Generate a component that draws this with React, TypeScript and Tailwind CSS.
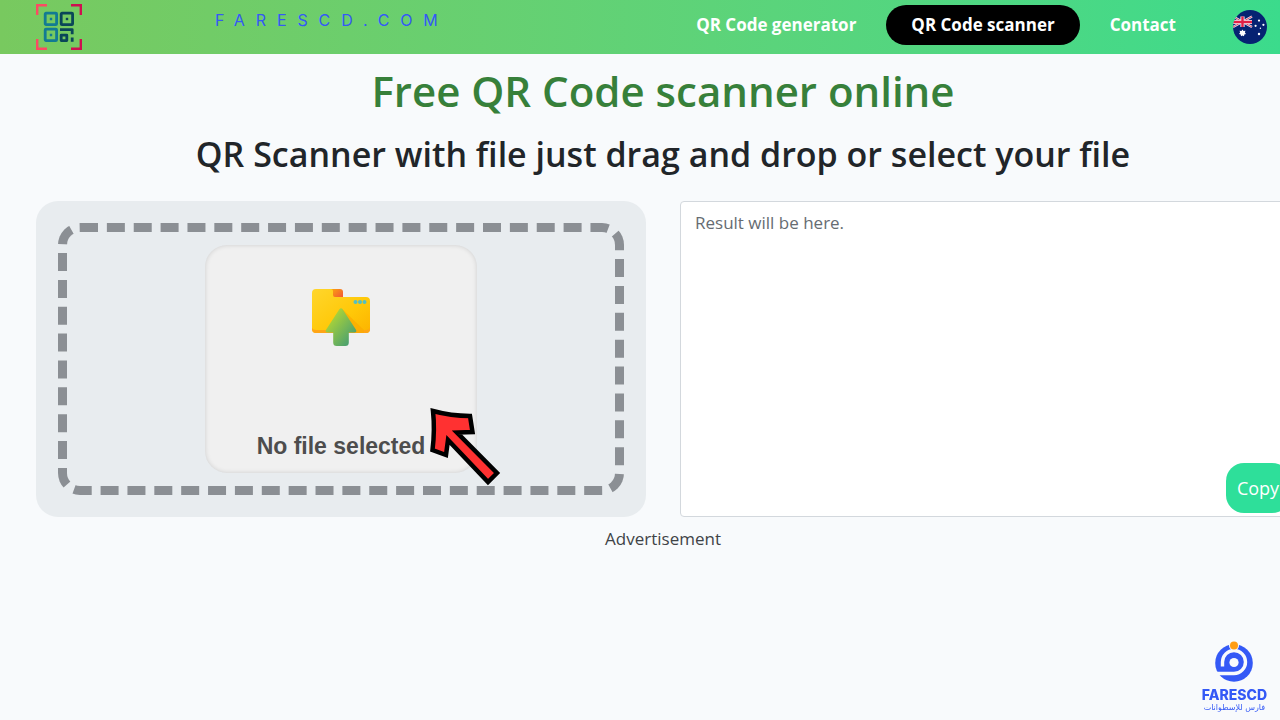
import { useState } from 'react'
import type { ReactNode } from 'react'

const NAV = [
  { label: 'QR Code generator', href: '#generator', active: false },
  { label: 'QR Code scanner', href: '#scanner', active: true },
  { label: 'Contact', href: '#contact', active: false },
]

function QrLogo() {
  return (
    <svg className="size-[46px]" viewBox="0 0 46 46" fill="none" aria-hidden="true">
      <g strokeWidth="2.4">
        <path d="M1.2 11V1.2H11M1.2 35v9.8H11" stroke="#fb4b63" />
        <path d="M35 1.2h9.8V11M44.8 35v9.8H35" stroke="#cf0f50" />
      </g>
      <g strokeWidth="2.8" strokeLinejoin="round">
        <rect x="9.2" y="9.2" width="11.4" height="11.4" rx="0.8" stroke="#127b93" />
        <rect x="25.2" y="9.2" width="11.4" height="11.4" rx="0.8" stroke="#0a4658" />
        <rect x="9.2" y="25.2" width="11.4" height="11.4" rx="0.8" stroke="#127b93" />
        <rect x="25.2" y="31.2" width="5.6" height="5.4" stroke="#0a4658" />
        <path d="M24 25.6h12.2v4.6M36.2 33.6v4.2" stroke="#0a4658" />
      </g>
      <path d="M13.8 13.8h2.4v2.4h-2.4zM13.8 29.8h2.4v2.4h-2.4z" fill="#127b93" />
      <path d="M29.8 13.8h2.4v2.4h-2.4z" fill="#0a4658" />
    </svg>
  )
}

function AustraliaFlag() {
  return (
    <svg className="size-[34px]" viewBox="0 0 34 34" aria-hidden="true">
      <clipPath id="flag-round">
        <circle cx="17" cy="17" r="17" />
      </clipPath>
      <g clipPath="url(#flag-round)">
        <rect width="34" height="34" fill="#062272" />
        <path d="M0 6.5l19 10.5M19 6.5L0 17" stroke="#e6e6f2" strokeWidth="2.4" />
        <path d="M0 6.5l19 10.5M19 6.5L0 17" stroke="#d9274a" strokeWidth="0.8" />
        <path d="M0 12h19M9.5 6.5V17" stroke="#f2eef5" strokeWidth="4.2" />
        <path d="M0 12h19M9.5 6.5V17" stroke="#e01f45" strokeWidth="2.4" />
      </g>
      <g fill="#fff">
        <path d="M9.5 19.4l1 1.6 1.9-.2-.5 1.8 1.1 1.3-1.7.7-.3 1.7-1.5-.9-1.5.9-.3-1.7-1.7-.7 1.1-1.3-.5-1.8 1.9.2z" />
        <circle cx="26" cy="10.6" r="1.1" />
        <circle cx="22.6" cy="15.8" r="1.1" />
        <circle cx="30.4" cy="14.8" r="1.1" />
        <circle cx="27.4" cy="18.2" r="0.7" />
        <circle cx="26" cy="24" r="1.2" />
      </g>
    </svg>
  )
}

function FolderUpload() {
  return (
    <svg className="size-[58px]" viewBox="0 0 58 58" aria-hidden="true">
      <defs>
        <linearGradient id="folder" x1="0" y1="0" x2="1" y2="1">
          <stop offset="0" stopColor="#ffd62c" />
          <stop offset="0.6" stopColor="#ffc808" />
          <stop offset="1" stopColor="#fdb300" />
        </linearGradient>
        <linearGradient id="tab" x1="0" y1="0" x2="1" y2="1">
          <stop offset="0" stopColor="#fca80a" />
          <stop offset="1" stopColor="#f04a3e" />
        </linearGradient>
        <linearGradient id="arrow" x1="0" y1="0" x2="1" y2="1">
          <stop offset="0.15" stopColor="#b5d832" />
          <stop offset="1" stopColor="#35957c" />
        </linearGradient>
      </defs>
      <path d="M18 0h10q3 0 3 3v8H18z" fill="url(#tab)" />
      <path
        d="M4 0h15q2 0 2 2v4q0 2 2 2h31q4 0 4 4v28q0 4-4 4H4q-4 0-4-4V4q0-4 4-4z"
        fill="url(#folder)"
      />
      <path d="M0 39v1q0 4 4 4h50q4 0 4-4v-1q-1 2-4 2H4q-3 0-4-2z" fill="#ffa516" />
      <path d="M30 20l22 21v3H36z" fill="#fbab02" opacity="0.7" />
      <g fill="#52bfc4">
        <circle cx="43.5" cy="13" r="2" />
        <circle cx="48" cy="13" r="2" />
        <circle cx="52.5" cy="13" r="2" />
      </g>
      <path
        d="M27.2 20.5q1.8-2.6 3.6 0l13 20q1.6 3-1.6 3h-5.4v10q0 3.5-3.5 3.5h-8.6q-3.5 0-3.5-3.5v-10H15.8q-3.2 0-1.6-3z"
        fill="url(#arrow)"
      />
    </svg>
  )
}

function PointerArrow() {
  return (
    <svg
      className="pointer-events-none absolute left-[393px] top-[204px] h-[84px] w-[74px]"
      viewBox="0 0 74 84"
      aria-hidden="true"
    >
      <path
        d="M4 6Q22 11 41 11L43.5 27L28 27.5L68 68L59 77L19 35L17 50L3.5 45Q6 25 4 6Z"
        fill="#ff3131"
        stroke="#000"
        strokeWidth="4.5"
      />
    </svg>
  )
}

function BrandMark() {
  return (
    <div className="fixed bottom-[7px] right-[13px] flex flex-col items-center text-[#3459f6]">
      <svg className="h-[42px] w-[38px]" viewBox="0 0 38 42" fill="none" aria-hidden="true">
        <circle cx="19" cy="22" r="18.8" fill="currentColor" />
        <path
          d="M0 32.5H19A11.5 11.5 0 1 0 7.5 21V25.5"
          stroke="#f8fafc"
          strokeWidth="3.4"
        />
        <circle cx="19" cy="21.5" r="4.6" fill="#f8fafc" />
        <circle cx="19" cy="4.5" r="5" fill="#f8fafc" />
        <circle cx="19" cy="4.5" r="4" fill="#ff9d14" />
      </svg>
      <span className="mt-1 font-['Inter',sans-serif] text-sm font-extrabold leading-4">FARESCD</span>
      <span lang="ar" dir="rtl" className="font-['DejaVu_Sans',sans-serif] text-[8px] leading-[10px]">
        فارس للإسطوانات
      </span>
    </div>
  )
}

function DropZone({ children }: { children: ReactNode }) {
  return (
    <div className="relative rounded-[22px] bg-[#e8ecef] p-[22px]">
      <div className="flex h-full justify-center rounded-[22px] border-[9px] border-dashed border-[#8b8f94] p-[13px]">
        {children}
      </div>
      <PointerArrow />
    </div>
  )
}

export default function App() {
  const [fileName, setFileName] = useState('')
  const [result, setResult] = useState('')

  return (
    <div className="min-h-screen overflow-x-hidden bg-[#f8fafc] font-['Open_Sans','Noto_Sans',sans-serif] text-[#212529]">
      <header className="flex h-[54px] items-center bg-linear-to-r from-[#78c95f] to-[#3bdb8c] pl-9 pr-[13px]">
        <a href="#home" aria-label="Home">
          <QrLogo />
        </a>
        <span className="ml-[133px] self-start pt-2 font-['Inter',sans-serif] text-base font-normal tracking-[0.68em] text-[#3459f6]">
          FARESCD.COM
        </span>
        <nav className="ml-auto flex items-center gap-[5px] pb-1">
          {NAV.map((item) => (
            <a
              key={item.label}
              href={item.href}
              aria-current={item.active ? 'page' : undefined}
              className={
                item.active
                  ? 'rounded-full bg-black px-[25px] py-2 text-[17px] font-bold leading-6 text-white'
                  : 'rounded-full px-[25px] py-2 text-[17px] font-bold leading-6 text-white'
              }
            >
              {item.label}
            </a>
          ))}
        </nav>
        <button type="button" aria-label="Change language" className="ml-8">
          <AustraliaFlag />
        </button>
      </header>

      {/* the content column runs a little past the right edge */}
      <main className="-mr-[46px] px-9 pt-3">
        <h1 className="text-center text-[42px] font-semibold leading-[50px] text-[#37803a]">
          Free QR Code scanner online
        </h1>
        <h2 className="mt-[15px] text-center text-[34px] font-semibold leading-[46px]">
          QR Scanner with file just drag and drop or select your file
        </h2>

        <div className="mt-6 grid grid-cols-2 gap-[34px]">
          <DropZone>
            <label className="flex h-[228px] w-[272px] cursor-pointer flex-col items-center justify-between rounded-[22px] bg-[#f0f0f0] pb-[13px] pt-11 shadow-[inset_0_0_5px_rgba(0,0,0,0.14)]">
              <FolderUpload />
              <span className="font-['Liberation_Sans',Arial,sans-serif] text-[23px] font-bold leading-7 text-[#4d4d4d]">
                {fileName || 'No file selected'}
              </span>
              <input
                type="file"
                accept="image/*"
                className="sr-only"
                onChange={(e) => setFileName(e.target.files?.[0]?.name ?? '')}
              />
            </label>
          </DropZone>

          <div className="relative">
            <textarea
              aria-label="Result"
              placeholder="Result will be here."
              value={result}
              onChange={(e) => setResult(e.target.value)}
              className="block h-full w-full resize-none rounded border border-[#d3d8dd] bg-white px-[14px] py-[7px] text-[17px] leading-7 placeholder:text-[#666c72]"
            />
            <button
              type="button"
              onClick={() => navigator.clipboard.writeText(result)}
              className="absolute bottom-1 right-0 h-[50px] w-16 rounded-[18px] bg-[#2edf9a] text-lg text-white"
            >
              Copy
            </button>
          </div>
        </div>

        <p className="mt-2 text-center text-[17px] leading-7 text-[#3f4347]">Advertisement</p>
      </main>

      <BrandMark />
    </div>
  )
}
